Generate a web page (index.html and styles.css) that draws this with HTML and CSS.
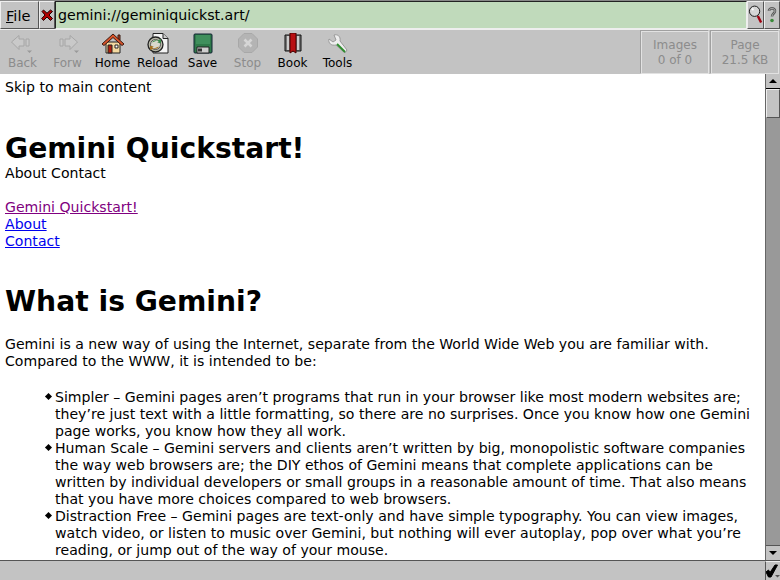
FILE: index.html
```html
<!DOCTYPE html>
<html lang="en">
<head>
<meta charset="utf-8">
<title>Gemini Quickstart!</title>
<link rel="stylesheet" href="styles.css">
</head>
<body>
<div class="app">
  <header class="urlbar">
    <div class="filebtn"><span class="ul">F</span>ile</div>
    <div class="closebtn">
      <svg width="14" height="14" viewBox="0 0 14 14"><path d="M2 3.500 3.500 2 7 5.200 10.500 2 12.500 3.500 9 7l3.500 3.500-2 2L7 9l-3.500 3.500-1.800-2L5 7z" fill="#b00000" stroke="#200" stroke-width="1"/></svg>
    </div>
    <div class="url">gemini://geminiquickst.art/</div>
    <div class="smallbtn search">
      <svg width="16" height="24" viewBox="0 0 16 24"><circle cx="7" cy="8" r="5.500" fill="#d6d6d6" stroke="#111" stroke-width="1"/><circle cx="5" cy="6" r="1.200" fill="#fff"/><path d="M10.500 13 14 20" stroke="#a00010" stroke-width="2.600"/></svg>
    </div>
    <div class="smallbtn help">
      <svg width="10" height="18" viewBox="0 0 10 18"><path d="M2 5C2 1.500 8 1.500 8 5 8 7.500 5 7.500 5 10.500" fill="none" stroke="#5a5a5a" stroke-width="2.600"/><path d="M2 5C2 1.500 8 1.500 8 5 8 7.500 5 7.500 5 10.500" fill="none" stroke="#a8a8a8" stroke-width="1"/><circle cx="5" cy="14.500" r="1.800" fill="#3a8a3a"/></svg>
    </div>
  </header>

  <nav class="toolbar">
    <div class="tool off">
      <svg class="ico" width="26" height="21" viewBox="0 0 26 21"><path d="M1.500 9 9 2.500V6h5v7H9v3.500zM16 6h3v7h-3z" fill="#c9c9c9" stroke="#a6a6a6"/><path d="M17 17.500h5l-2.500 2.500z" fill="#999"/></svg>
      <span>Back</span>
    </div>
    <div class="tool off">
      <svg class="ico" width="26" height="21" viewBox="0 0 26 21"><path d="M22.500 9 15 2.500V6h-5v7h5v3.500zM8 6H5v7h3z" fill="#c9c9c9" stroke="#a6a6a6"/><path d="M19 17.500h5l-2.500 2.500z" fill="#999"/></svg>
      <span>Forw</span>
    </div>
    <div class="tool">
      <svg class="ico" width="24" height="21" viewBox="0 0 24 21"><path d="M5 9h14v11H5z" fill="#f4d9a0" stroke="#222"/><path d="M17 2h2v5l-2-1z" fill="#b5432a" stroke="#3a1a10"/><path d="M1 11 12 1l11 10-2 1.500-9-8-9 8z" fill="#d9542b" stroke="#3a1a10"/><path d="M7 12h4v8H7z" fill="#b0200c" stroke="#222"/><path d="M14 12h3v3h-3z" fill="#fff" stroke="#222"/></svg>
      <span>Home</span>
    </div>
    <div class="tool">
      <svg class="ico" width="24" height="21" viewBox="0 0 24 21"><path d="M7 .5h10l5 5v14.500H7z" fill="#f4f4f4" stroke="#222"/><path d="M17 .5v5h5" fill="#ccc" stroke="#222"/><circle cx="9.500" cy="11.500" r="7.500" fill="#b9b9a8" stroke="#222" stroke-width="1.300"/><circle cx="9.500" cy="11.500" r="5" fill="#d9d9cc" stroke="#555"/><path d="M6 9.500A4 4 0 0 1 13 9l-2 1h4V6z" fill="#3a8a4a"/><path d="M13 13.500A4 4 0 0 1 6 14l2-1H4v4z" fill="#a5701f"/></svg>
      <span>Reload</span>
    </div>
    <div class="tool">
      <svg class="ico" width="20" height="21" viewBox="0 0 20 21"><path d="M2 1h16a1 1 0 0 1 1 1v17a1 1 0 0 1-1 1H2a1 1 0 0 1-1-1V2a1 1 0 0 1 1-1z" fill="#2f7a4a" stroke="#123"/><path d="M3 2h14v9H3z" fill="#3f8f5c"/><path d="M4 14h12v6H4z" fill="#cfcfcf" stroke="#222"/><path d="M5 15.500h4v3H5z" fill="#333"/></svg>
      <span>Save</span>
    </div>
    <div class="tool off">
      <svg class="ico" width="20" height="21" viewBox="0 0 20 21"><path d="M6 .5h8L19.500 6v8L14 19.500H6L.5 14V6z" fill="#b4b4b4" stroke="#a8a8a8"/><path d="M6.500 6.500l7 7m0-7l-7 7" stroke="#d6d6d6" stroke-width="2.600"/></svg>
      <span>Stop</span>
    </div>
    <div class="tool">
      <svg class="ico" width="18" height="21" viewBox="0 0 18 21"><path d="M1 2h16v16H1z" fill="#777" stroke="#111"/><path d="M3 3h2v14H3zM13 3h2v14h-2z" fill="#ccc"/><path d="M6 0h6v20l-3-2-3 2z" fill="#b80f12" stroke="#400"/></svg>
      <span>Book</span>
    </div>
    <div class="tool">
      <svg class="ico" width="20" height="21" viewBox="0 0 20 21"><path d="M1 6 5 9 8 7 6 2C9 1 13 3 12 8l7 9-2 3-9-8C3 13 0 10 1 6z" fill="#eee" stroke="#999"/><path d="M9 11l8 8" stroke="#2e8b2e" stroke-width="2"/></svg>
      <span>Tools</span>
    </div>
    <div class="stats">
      <div class="stat"><span>Images</span><span>0 of 0</span></div>
      <div class="stat"><span>Page</span><span>21.5 KB</span></div>
    </div>
  </nav>

  <div class="middle">
    <main class="content">
      <p class="skip">Skip to main content</p>
      <h1 class="title">Gemini Quickstart!</h1>
      <p>About Contact</p>
      <div class="links">
        <a class="visited" href="#a">Gemini Quickstart!</a><br>
        <a href="#b">About</a><br>
        <a href="#c">Contact</a>
      </div>
      <h1 class="what">What is Gemini?</h1>
      <p class="intro">Gemini is a new way of using the Internet, separate from the World Wide Web you are familiar with. Compared to the WWW, it is intended to be:</p>
      <ul>
        <li>Simpler – Gemini pages aren’t programs that run in your browser like most modern websites are; they’re just text with a little formatting, so there are no surprises. Once you know how one Gemini page works, you know how they all work.</li>
        <li>Human Scale – Gemini servers and clients aren’t written by big, monopolistic software companies the way web browsers are; the DIY ethos of Gemini means that complete applications can be written by individual developers or small groups in a reasonable amount of time. That also means that you have more choices compared to web browsers.</li>
        <li>Distraction Free – Gemini pages are text-only and have simple typography. You can view images, watch video, or listen to music over Gemini, but nothing will ever autoplay, pop over what you’re reading, or jump out of the way of your mouse.</li>
      </ul>
    </main>
    <aside class="scrollbar">
      <div class="arrow"><i class="up"></i></div>
      <div class="thumb"></div>
      <div class="track"></div>
      <div class="arrow"><i class="down"></i></div>
    </aside>
  </div>

  <footer class="status">
    <div class="statustext"></div>
    <div class="check">
      <svg width="14" height="15" viewBox="0 0 14 15"><path d="M0 8l2.500-2 1.500 2.500L9 1h2.500L5 13H2.500z" fill="#000" stroke="#000"/><path d="M9 11h5l-2.500 2.500z" fill="#555"/></svg>
    </div>
  </footer>
</div>
</body>
</html>
```

FILE: styles.css
```css
* { box-sizing: border-box; }
html, body { margin: 0; padding: 0; }
body { width: 780px; height: 580px; overflow: hidden; font-family: "DejaVu Sans", sans-serif; font-size: 14.08px; line-height: 17px; background: #c3c3c3; color: #000; }
.app { display: flex; flex-direction: column; width: 780px; height: 580px; }

.urlbar { display: flex; height: 29px; background: #c3c3c3; border-top: 1px solid #888; }
.filebtn { width: 39px; padding: 5px 0 0 5px; font-size: 14.6px; border: 1px solid; border-color: #eee #555 #555 #eee; }
.ul { text-decoration: underline; }
.closebtn { width: 16px; display: flex; align-items: center; justify-content: center; border: 1px solid; border-color: #eee #555 #555 #eee; }
.url { flex: 1; background: #c0dabb; padding: 5px 0 0 2px; font-size: 14.2px; border: 1px solid; border-color: #222 #eee #eee #222; }
.smallbtn { display: flex; align-items: center; justify-content: center; border: 1px solid; border-color: #eee #555 #555 #eee; }
.search { width: 17px; }
.help { width: 16px; }

.toolbar { display: flex; align-items: flex-start; height: 45px; background: #c3c3c3; border-top: 1px solid #eee; }
.tool { width: 45px; display: flex; flex-direction: column; align-items: center; font-size: 12px; line-height: 14px; color: #000; padding-top: 3px; }
.tool .ico { height: 21px; margin-bottom: 2px; }
.tool.off { color: #8c8c8c; }
.stats { display: flex; margin-left: auto; gap: 2px; padding: 1px 1px 0 0; }
.stat { width: 68px; height: 43px; display: flex; flex-direction: column; align-items: center; justify-content: center; font-size: 12px; line-height: 15px; color: #8c8c8c; border: 1px solid #e2e2e2; box-shadow: -1px -1px 0 #a0a0a0; }

.middle { flex: 1; display: flex; min-height: 0; }
.content { flex: 1; background: #fff; padding: 5px 14px 0 5px; overflow: hidden; }
.content p { margin: 0; }
h1 { margin: 0; font-size: 28.2px; line-height: 33px; font-weight: bold; }
.title { margin-top: 36px; }
.links { margin-top: 17px; }
a { color: #0000ee; }
a.visited { color: #800080; }
.what { margin-top: 35px; }
.content .intro { margin-top: 18px; }
ul { margin: 19px 0 0; padding: 0 0 0 50px; list-style: none; }
li { position: relative; }
li::before { content: ""; position: absolute; left: -9px; top: 5px; width: 5px; height: 5px; background: #000; transform: rotate(45deg); }

.scrollbar { width: 15px; display: flex; flex-direction: column; background: #999; border-left: 1px solid #666; }
.arrow { height: 15px; background: #c3c3c3; border-bottom: 1px solid #000; display: flex; align-items: center; justify-content: center; flex: none; }
.arrow:last-child { border-bottom: 0; border-top: 1px solid #555; }
.arrow i { width: 0; height: 0; border-left: 4px solid transparent; border-right: 4px solid transparent; }
.arrow .up { border-bottom: 4px solid #000; }
.arrow .down { border-top: 4px solid #000; }
.thumb { height: 29px; background: #c3c3c3; border: 1px solid; border-color: #eee #555 #555 #eee; flex: none; }
.track { flex: 1; }

.status { display: flex; height: 20px; background: #c3c3c3; border-top: 1px solid #555; }
.statustext { flex: 1; }
.check { width: 15px; border-left: 1px solid #555; display: flex; align-items: center; justify-content: center; border-top: 1px solid #eee; }
```
